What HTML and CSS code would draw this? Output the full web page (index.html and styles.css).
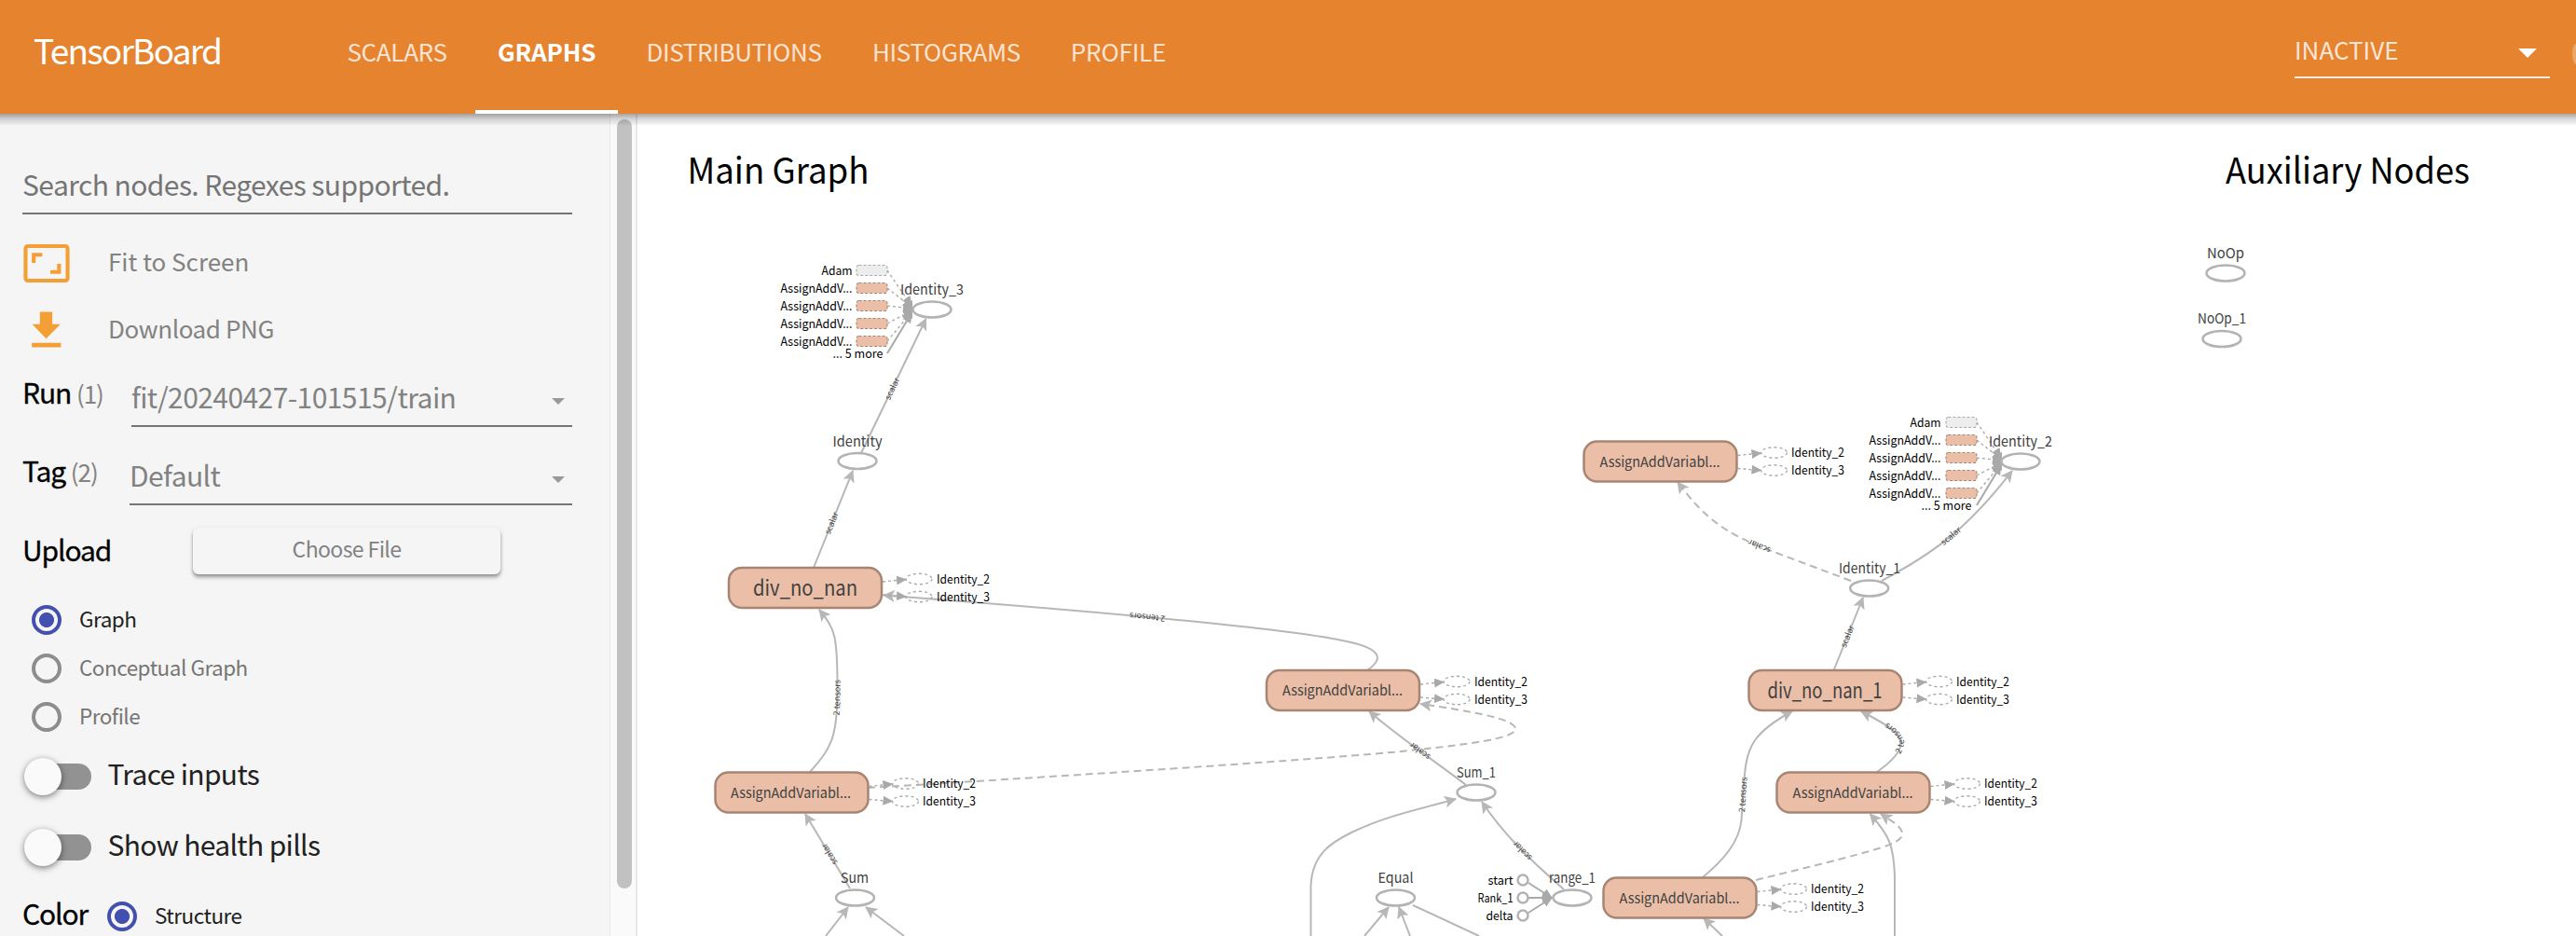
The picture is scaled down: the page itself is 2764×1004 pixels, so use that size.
FILE: index.html
```html
<!DOCTYPE html>
<html lang="en">
<head>
<meta charset="utf-8">
<title>TensorBoard</title>
<link rel="stylesheet" href="styles.css">
</head>
<body>
<header class="toolbar">
  <div class="brand">TensorBoard</div>
  <nav class="tabs">
    <a class="tab tab-scalars">SCALARS</a>
    <a class="tab tab-graphs active">GRAPHS</a>
    <a class="tab tab-distributions">DISTRIBUTIONS</a>
    <a class="tab tab-histograms">HISTOGRAMS</a>
    <a class="tab tab-profile">PROFILE</a>
  </nav>
  <div class="inactive"><span>INACTIVE</span>
    <svg class="inactive-caret" viewBox="0 0 20 10"><path d="M0 0H20L10 10Z"/></svg>
  </div>
  <span class="reload"></span>
</header>
<div class="content">
  <aside class="sidebar">
    <div class="search">Search nodes. Regexes supported.</div>
    <div class="action">
      <svg class="icon" viewBox="0 0 48 40"><rect x="2" y="2" width="44" height="36" rx="2.5" fill="none" stroke="#f39f35" stroke-width="4"/><path d="M8.5 9H19.500V13H12.500V19.500H8.500ZM39 31H28V27H35V20.500H39Z" fill="#f39f35"/></svg>
      <span>Fit to Screen</span>
    </div>
    <div class="action download">
      <svg class="icon" viewBox="0 0 48 40"><path d="M17 1.500H30V14.500H38.500L23.500 29.500L9 14.500H17ZM8.500 34H39V38.500H8.500Z" fill="#f39f35"/></svg>
      <span>Download PNG</span>
    </div>
    <div class="field field-run">
      <label>Run <em>(1)</em></label>
      <div class="select">fit/20240427-101515/train<svg class="caret" viewBox="0 0 14 7"><path d="M0 0H14L7 7Z"/></svg></div>
    </div>
    <div class="field field-tag">
      <label>Tag <em>(2)</em></label>
      <div class="select">Default<svg class="caret" viewBox="0 0 14 7"><path d="M0 0H14L7 7Z"/></svg></div>
    </div>
    <div class="upload"><label>Upload</label><button class="choose">Choose File</button></div>
    <div class="radio checked"><i></i><span>Graph</span></div>
    <div class="radio"><i></i><span>Conceptual Graph</span></div>
    <div class="radio"><i></i><span>Profile</span></div>
    <div class="toggle"><i></i><span>Trace inputs</span></div>
    <div class="toggle"><i></i><span>Show health pills</span></div>
    <div class="color"><label>Color</label><div class="radio checked"><i></i><span>Structure</span></div></div>
  </aside>
  <div class="scrollbar"><div class="thumb"></div></div>
  <main class="graph">
<svg viewBox="684 122 2080 882" width="2080" height="882">
<defs>
  <marker id="arrow" markerUnits="userSpaceOnUse" markerWidth="14" markerHeight="14" refX="12" refY="6.500" orient="auto"><path d="M0 0L13 6.500L0 13L3 6.500Z" fill="#b7b7b7"/></marker>
  <marker id="tri" markerUnits="userSpaceOnUse" markerWidth="12" markerHeight="12" refX="10" refY="5" orient="auto"><path d="M0 0L11 5L0 10Z" fill="#a9a9a9"/></marker>
  <rect id="box" x="-82" y="-21.500" width="164" height="43" rx="14"/>
  <ellipse id="op" rx="20.500" ry="8.500"/>
  <g id="outs">
    <path d="M83 -6.500L108 -9" marker-end="url(#tri)"/><path d="M83 7.500L108 9.500" marker-end="url(#tri)"/>
    <ellipse cx="122" cy="-9.500" rx="14" ry="5.700"/><ellipse cx="122" cy="9.500" rx="14" ry="5.700"/>
  </g>
  <g id="ins">
    <g class="dotted">
    <path d="M-48 -42L-22 -4" marker-end="url(#tri)"/><path d="M-48 -23L-21 -2" marker-end="url(#tri)"/>
    <path d="M-48 -4L-21 -1" marker-end="url(#tri)"/><path d="M-48 15L-21 1" marker-end="url(#tri)"/>
    <path d="M-48 34L-22 3" marker-end="url(#tri)"/></g>
    <path d="M-48 47L-22 4" stroke="#a9a9a9" stroke-width="2" fill="none" marker-end="url(#tri)"/>
    <path d="M-30 -4L-27 -8L-21 -10V10L-27 8L-30 4Z" fill="#a9a9a9"/>
    <g class="mini"><rect class="gray" x="-81" y="-47.500" width="33" height="11" rx="2.500"/>
    <rect x="-81" y="-28.500" width="33" height="11" rx="2.500"/><rect x="-81" y="-9.500" width="33" height="11" rx="2.500"/>
    <rect x="-81" y="9.500" width="33" height="11" rx="2.500"/><rect x="-81" y="28.500" width="33" height="11" rx="2.500"/></g>
  </g>
</defs>

<g class="title">
  <text x="737.500" y="196.500" textLength="195" lengthAdjust="spacingAndGlyphs">Main Graph</text>
  <text x="2388" y="196.500" textLength="262" lengthAdjust="spacingAndGlyphs">Auxiliary Nodes</text>
</g>

<g class="edges">
  <path id="e1" d="M924 486L993.500 342"/>
  <path id="e2" d="M873 609L915 505"/>
  <path id="e3" d="M869 828C893 803 898 788 898.500 745C899 680 896 675 879 654"/>
  <path id="e4" d="M912 953L864 873"/>
  <path id="e5" d="M1467 719C1486 706 1482 695 1440 687C1370 673 1180 656 948 638.500"/>
  <path id="e6" d="M1573 842C1550 824 1500 790 1469 763"/>
  <path d="M1406.500 1004V950C1408 915 1430 903 1450 893C1487 875 1520 869 1562 857"/>
  <path id="e7" d="M1678 954C1640 921 1612 893 1590 860"/>
  <path id="e8" d="M1968 718L1999 641"/>
  <path id="e9" d="M2019 623C2080 591 2115 562 2159 505"/>
  <path id="e10" d="M1827 941C1850 922 1866 903 1868.500 880C1872 830 1871 812 1883 794C1892 782 1904 773 1923 763"/>
  <path id="e11" d="M2014 828C2034 814 2040 804 2040 796C2038 785 2022 776 1997 763"/>
  <path d="M2033 1004V940C2032 905 2026 895 2006.500 873"/>
  <path d="M1848 1004L1828 985"/>
  <path d="M886 1004L910 973"/><path d="M970 1004L929 973"/>
  <path d="M1464 1004L1490 973"/><path d="M1513 1004L1501 973"/>
</g>
<path class="plain" d="M1516 971L1587 1004"/>
<g class="edges dashed">
  <path d="M931 845C1150 832 1380 817 1493 807C1575 799 1626 792 1626 782C1626 770 1570 762 1524 755"/>
  <path id="e12" d="M1986 623L1890 587C1850 570 1830 557 1800 517"/>
  <path d="M1884 944L1957 926C2010 912 2038 906 2041 896C2043 888 2030 881 2018 873"/>
</g>
<g class="plain input">
  <path d="M1640 947L1665 963" marker-end="url(#tri)"/><path d="M1640 963H1665" marker-end="url(#tri)"/><path d="M1640 979L1665 963" marker-end="url(#tri)"/>
  <circle cx="1634" cy="944" r="5.500"/><circle cx="1634" cy="963" r="5.500"/><circle cx="1634" cy="982" r="5.500"/>
</g>

<g class="edge-label">
  <text dy="3"><textPath href="#e1" startOffset="48%">scalar</textPath></text>
  <text dy="3"><textPath href="#e2" startOffset="46%">scalar</textPath></text>
  <text dy="3"><textPath href="#e3" startOffset="47%">2 tensors</textPath></text>
  <text dy="3"><textPath href="#e4" startOffset="46%">scalar</textPath></text>
  <text dy="3"><textPath href="#e5" startOffset="49%">2 tensors</textPath></text>
  <text dy="3"><textPath href="#e6" startOffset="47%">scalar</textPath></text>
  <text dy="3"><textPath href="#e7" startOffset="47%">scalar</textPath></text>
  <text dy="3"><textPath href="#e8" startOffset="46%">scalar</textPath></text>
  <text dy="3"><textPath href="#e9" startOffset="48%">scalar</textPath></text>
  <text dy="3"><textPath href="#e10" startOffset="48%">2 tensors</textPath></text>
  <text dy="3"><textPath href="#e11" startOffset="50%">2 tensors</textPath></text>
  <text dy="3"><textPath href="#e12" startOffset="48%">scalar</textPath></text>
</g>

<g class="boxes">
  <use href="#box" x="864" y="630.500"/><use href="#box" x="849.500" y="850"/><use href="#box" x="1441" y="740.500"/>
  <use href="#box" x="1781.500" y="495"/><use href="#box" x="1958.500" y="740.500"/><use href="#box" x="1988.500" y="850"/><use href="#box" x="1802.500" y="963"/>
</g>
<g class="outs">
  <use href="#outs" x="864" y="630.500"/><use href="#outs" x="849.500" y="850"/><use href="#outs" x="1441" y="740.500"/>
  <use href="#outs" x="1781.500" y="495"/><use href="#outs" x="1958.500" y="740.500"/><use href="#outs" x="1988.500" y="850"/><use href="#outs" x="1802.500" y="963"/>
</g>
<use href="#ins" x="1000" y="332"/><use href="#ins" x="2169" y="495"/>
<g class="ops">
  <use href="#op" x="1000" y="332"/><use href="#op" x="920" y="494.500"/><use href="#op" x="917.500" y="963"/>
  <use href="#op" x="1584" y="850"/><use href="#op" x="1497.500" y="963"/><use href="#op" x="1687" y="963"/>
  <use href="#op" x="2168" y="495"/><use href="#op" x="2005.700" y="631"/><use href="#op" x="2388" y="293"/><use href="#op" x="2384" y="363.500"/>
</g>

<g class="op-label">
  <text x="1000" y="315.500" textLength="68" lengthAdjust="spacingAndGlyphs">Identity_3</text>
  <text x="920" y="478.500" textLength="53" lengthAdjust="spacingAndGlyphs">Identity</text>
  <text x="917" y="946.500" textLength="30" lengthAdjust="spacingAndGlyphs">Sum</text>
  <text x="1584" y="833.500" textLength="42" lengthAdjust="spacingAndGlyphs">Sum_1</text>
  <text x="1497.500" y="946.500" textLength="38" lengthAdjust="spacingAndGlyphs">Equal</text>
  <text x="1687" y="946.500" textLength="50" lengthAdjust="spacingAndGlyphs">range_1</text>
  <text x="2168" y="478.500" textLength="68" lengthAdjust="spacingAndGlyphs">Identity_2</text>
  <text x="2006" y="614.500" textLength="66" lengthAdjust="spacingAndGlyphs">Identity_1</text>
  <text x="2388" y="276.500" textLength="40" lengthAdjust="spacingAndGlyphs">NoOp</text>
  <text x="2384" y="347" textLength="52" lengthAdjust="spacingAndGlyphs">NoOp_1</text>
  <text x="848.500" y="855.500" textLength="129" lengthAdjust="spacingAndGlyphs">AssignAddVariabl...</text>
  <text x="1440.500" y="745.500" textLength="129" lengthAdjust="spacingAndGlyphs">AssignAddVariabl...</text>
  <text x="1781" y="500.500" textLength="129" lengthAdjust="spacingAndGlyphs">AssignAddVariabl...</text>
  <text x="1988" y="855.500" textLength="129" lengthAdjust="spacingAndGlyphs">AssignAddVariabl...</text>
  <text x="1802" y="968.500" textLength="129" lengthAdjust="spacingAndGlyphs">AssignAddVariabl...</text>
</g>
<g class="big-label">
  <text x="864" y="638.500" textLength="112" lengthAdjust="spacingAndGlyphs">div_no_nan</text>
  <text x="1958" y="748.500" textLength="123" lengthAdjust="spacingAndGlyphs">div_no_nan_1</text>
</g>
<g class="note">
  <text x="1005" y="625.500" textLength="57" lengthAdjust="spacingAndGlyphs">Identity_2</text><text x="1005" y="644.500" textLength="57" lengthAdjust="spacingAndGlyphs">Identity_3</text>
  <text x="990" y="845" textLength="57" lengthAdjust="spacingAndGlyphs">Identity_2</text><text x="990" y="864" textLength="57" lengthAdjust="spacingAndGlyphs">Identity_3</text>
  <text x="1582" y="735.500" textLength="57" lengthAdjust="spacingAndGlyphs">Identity_2</text><text x="1582" y="754.500" textLength="57" lengthAdjust="spacingAndGlyphs">Identity_3</text>
  <text x="1922" y="490" textLength="57" lengthAdjust="spacingAndGlyphs">Identity_2</text><text x="1922" y="509" textLength="57" lengthAdjust="spacingAndGlyphs">Identity_3</text>
  <text x="2099" y="735.500" textLength="57" lengthAdjust="spacingAndGlyphs">Identity_2</text><text x="2099" y="754.500" textLength="57" lengthAdjust="spacingAndGlyphs">Identity_3</text>
  <text x="2129" y="845" textLength="57" lengthAdjust="spacingAndGlyphs">Identity_2</text><text x="2129" y="864" textLength="57" lengthAdjust="spacingAndGlyphs">Identity_3</text>
  <text x="1943" y="958" textLength="57" lengthAdjust="spacingAndGlyphs">Identity_2</text><text x="1943" y="977" textLength="57" lengthAdjust="spacingAndGlyphs">Identity_3</text>
</g>
<g class="note end">
  <text x="914.500" y="294.500" textLength="33" lengthAdjust="spacingAndGlyphs">Adam</text>
  <text x="914.500" y="313.500" textLength="77" lengthAdjust="spacingAndGlyphs">AssignAddV...</text><text x="914.500" y="332.500" textLength="77" lengthAdjust="spacingAndGlyphs">AssignAddV...</text>
  <text x="914.500" y="351.500" textLength="77" lengthAdjust="spacingAndGlyphs">AssignAddV...</text><text x="914.500" y="370.500" textLength="77" lengthAdjust="spacingAndGlyphs">AssignAddV...</text>
  <text x="947.500" y="384" textLength="54" lengthAdjust="spacingAndGlyphs">... 5 more</text>
  <text x="2082.500" y="457.500" textLength="33" lengthAdjust="spacingAndGlyphs">Adam</text>
  <text x="2082.500" y="476.500" textLength="77" lengthAdjust="spacingAndGlyphs">AssignAddV...</text><text x="2082.500" y="495.500" textLength="77" lengthAdjust="spacingAndGlyphs">AssignAddV...</text>
  <text x="2082.500" y="514.500" textLength="77" lengthAdjust="spacingAndGlyphs">AssignAddV...</text><text x="2082.500" y="533.500" textLength="77" lengthAdjust="spacingAndGlyphs">AssignAddV...</text>
  <text x="2115.500" y="547" textLength="54" lengthAdjust="spacingAndGlyphs">... 5 more</text>
  <text x="1623.500" y="948.500" textLength="27" lengthAdjust="spacingAndGlyphs">start</text><text x="1623.500" y="967.500" textLength="38" lengthAdjust="spacingAndGlyphs">Rank_1</text><text x="1623.500" y="986.500" textLength="29" lengthAdjust="spacingAndGlyphs">delta</text>
</g>
</svg>
  </main>
</div>
</body>
</html>
```
FILE: styles.css
```css
* { box-sizing: border-box; }
body {
  margin: 0;
  height: 1004px;
  overflow: hidden;
  display: flex;
  flex-direction: column;
  background: #fff;
  font-family: "Noto Sans CJK KR", "Noto Sans", sans-serif;
}

/* toolbar */
.toolbar {
  position: relative;
  z-index: 2;
  flex: none;
  height: 122px;
  display: flex;
  background: #e6832f;
  color: #fff;
}
.toolbar::after {
  content: "";
  position: absolute;
  left: 0;
  right: 0;
  top: 122px;
  height: 12px;
  background: linear-gradient(rgba(0, 0, 0, .34), rgba(0, 0, 0, .14) 50%, rgba(0, 0, 0, .03));
}
.brand {
  width: 342px;
  padding-left: 36px;
  font-size: 37px;
  line-height: 106px;
  letter-spacing: -1.75px;
}
.tabs { display: flex; flex: 1; }
.tab {
  padding: 0 24px;
  font-size: 26px;
  line-height: 109px;
  text-align: center;
  letter-spacing: -.35px;
  white-space: nowrap;
  color: rgba(255, 255, 255, .8);
}
.tab-scalars { width: 168px; }
.tab-graphs { width: 153px; letter-spacing: -.1px; }
.tab-distributions { width: 249px; }
.tab-histograms { width: 206px; }
.tab-profile { width: 164px; letter-spacing: -.2px; }
.tab.active {
  font-weight: 700;
  color: #fff;
  border-bottom: 4px solid #fff;
}
.inactive {
  width: 274px;
  height: 84px;
  padding-top: 24px;
  border-bottom: 2px solid rgba(255, 255, 255, .85);
  display: flex;
  justify-content: space-between;
  font-size: 26px;
  line-height: 58px;
  color: rgba(255, 255, 255, .82);
}
.inactive-caret { width: 20px; height: 10px; margin: 28px 14px 0 0; fill: #fff; }
.reload {
  flex: none;
  width: 4px;
  height: 22px;
  margin: 47px 0 0 24px;
  border-radius: 4px 0 0 4px / 11px 0 0 11px;
  background: #eda46a;
}

.content { flex: 1; min-height: 0; display: flex; }

/* sidebar */
.sidebar {
  width: 654px;
  padding: 44px 40px 0 24px;
  background: #f5f5f5;
  overflow: hidden;
}
.search {
  height: 64px;
  border-bottom: 2px solid #757575;
  font-size: 30px;
  line-height: 62px;
  letter-spacing: -.57px;
  color: #757575;
}
.action {
  height: 72px;
  margin-top: 16px;
  padding-left: 1px;
  display: flex;
  align-items: center;
  font-size: 26px;
  color: #828282;
}
.action.download { height: 70px; margin-top: 0; letter-spacing: -.4px; }
.icon { width: 50px; height: 41px; margin-right: 41px; }
.action span { padding-bottom: 6px; }
.action.download span { padding-bottom: 4px; }
.field { height: 70px; display: flex; align-items: flex-end; }
.field-tag { height: 84px; }
label {
  font-size: 30px;
  letter-spacing: -1.1px;
  color: #000;
  -webkit-text-stroke: .3px #000;
}
.field label { width: 117px; line-height: 73px; white-space: nowrap; }
.field-tag label { width: 115px; }
label em {
  font-style: normal;
  font-size: 26px;
  letter-spacing: -1px;
  color: #828282;
  -webkit-text-stroke: 0;
}
.select {
  flex: 1;
  height: 64px;
  display: flex;
  justify-content: space-between;
  border-bottom: 2px solid #757575;
  font-size: 30px;
  line-height: 62px;
  letter-spacing: -.57px;
  color: #828282;
}
.caret { width: 14px; height: 7px; margin: 33px 8px 0 0; fill: #999; }
.upload { height: 97px; display: flex; align-items: center; }
.upload label { width: 183px; padding-bottom: 4px; }
.choose {
  width: 330px;
  height: 50px;
  padding: 0 0 6px;
  border: 0;
  border-radius: 6px;
  background: #f5f5f5;
  box-shadow: 0 4px 4px rgba(0, 0, 0, .2), 0 2px 3px rgba(0, 0, 0, .22), 0 1px 6px rgba(0, 0, 0, .08);
  font: 23px "Noto Sans CJK KR", sans-serif;
  letter-spacing: -.6px;
  color: #828282;
}
.radio {
  height: 52px;
  padding-left: 10px;
  display: flex;
  align-items: center;
  font-size: 22.5px;
  letter-spacing: -.5px;
  color: #757575;
}
.radio span { padding-bottom: 5px; }
.radio i {
  width: 32px;
  height: 32px;
  margin-right: 19px;
  border: 4px solid #8d8d8d;
  border-radius: 50%;
}
.radio.checked { color: #212121; }
.radio.checked i {
  border-color: #4350b0;
  background: radial-gradient(circle, #4350b0 7.6px, transparent 8.4px);
}
.toggle {
  height: 76px;
  display: flex;
  align-items: center;
  font-size: 30px;
  letter-spacing: -.65px;
  color: #212121;
}
.toggle i {
  position: relative;
  width: 74px;
  height: 28px;
  margin-right: 17.5px;
  border-radius: 14px;
  background: linear-gradient(90deg, transparent 20px, #929292 20px);
}
.toggle i::before {
  content: "";
  position: absolute;
  left: 2px;
  top: -6px;
  width: 40px;
  height: 40px;
  border-radius: 50%;
  background: #fafafa;
  box-shadow: 0 2px 7px rgba(0, 0, 0, .5);
}
.toggle span { padding-bottom: 8px; }
.color { height: 72px; display: flex; align-items: center; }
.color label { width: 81px; padding-bottom: 9px; }

/* scroll track */
.scrollbar {
  width: 30px;
  padding: 6px 0 0 7px;
  border: solid #e8e8e8;
  border-width: 0 2px 0 1px;
  background: #fafafa;
}
.thumb { width: 16px; height: 825px; border-radius: 8px; background: #c1c1c1; }

/* graph canvas */
.graph { flex: 1; overflow: hidden; }
.graph svg { display: block; }
.title { font-size: 38px; fill: #000; }
.edges path, .plain { fill: none; stroke: #b7b7b7; stroke-width: 2; }
.edges path { marker-end: url(#arrow); }
.dashed path { stroke-dasharray: 8 5; }
.input path { stroke: #a9a9a9; }
.input circle { fill: #fff; stroke: #b3b3b3; stroke-width: 2.5; }
.boxes { fill: #ebbfa7; stroke: #a88573; stroke-width: 2.5; }
.outs, .dotted { fill: none; stroke: #aaa; stroke-width: 1.4; stroke-dasharray: 3 3; }
.mini { fill: #ebbfa7; stroke: #a88573; stroke-width: 1.1; stroke-dasharray: 3 2; }
.mini .gray { fill: #ededed; stroke: #aaa; }
.ops { fill: #fff; stroke: #b3b3b3; stroke-width: 2.5; }
.op-label { font-size: 15px; fill: #414141; text-anchor: middle; }
.big-label { font-size: 23px; fill: #414141; text-anchor: middle; }
.note { font-size: 13px; fill: #000; }
.end { text-anchor: end; }
.edge-label { font-size: 9px; fill: #444; text-anchor: middle; }
```
